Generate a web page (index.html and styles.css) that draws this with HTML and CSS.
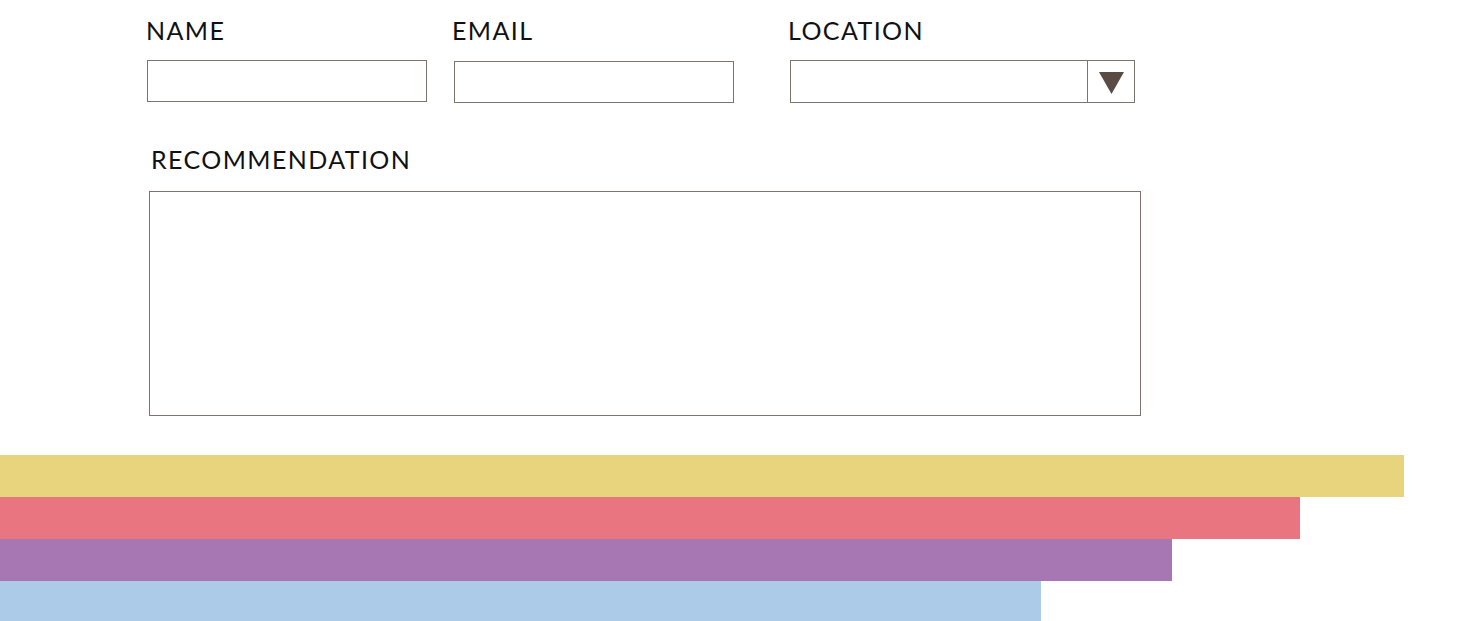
FILE: index.html
```html
<!DOCTYPE html>
<html lang="en">
<head>
<meta charset="utf-8">
<title>Recommendation form</title>
<link rel="stylesheet" href="styles.css">
</head>
<body>
<form class="form">
  <div class="row">
    <div class="field field-name">
      <label class="label">NAME</label>
      <div class="input"></div>
    </div>
    <div class="field field-email">
      <label class="label">EMAIL</label>
      <div class="input"></div>
    </div>
    <div class="field field-location">
      <label class="label">LOCATION</label>
      <div class="select">
        <div class="select-value"></div>
        <div class="select-btn">
          <svg width="25" height="22" viewBox="0 0 25 22"><polygon points="0,0 25,0 12.5,22" fill="#5a4b45"/></svg>
        </div>
      </div>
    </div>
  </div>
  <div class="field field-rec">
    <label class="label label-rec">RECOMMENDATION</label>
    <div class="textarea"></div>
  </div>
</form>
<div class="bars">
  <div class="bar bar-yellow"></div>
  <div class="bar bar-red"></div>
  <div class="bar bar-purple"></div>
  <div class="bar bar-blue"></div>
</div>
</body>
</html>
```

FILE: styles.css
```css
html, body {
  margin: 0;
  padding: 0;
  background: #ffffff;
}
body {
  font-family: "Lato", "Open Sans", sans-serif;
  color: #111111;
  overflow: hidden;
}
.form {
  padding: 14px 0 0 146px;
}
.row {
  display: flex;
  align-items: flex-start;
}
.field {
  display: flex;
  flex-direction: column;
}
.field-name { width: 282px; }
.field-email { width: 282px; margin-left: 24px; }
.field-location { margin-left: 54px; }
.label {
  font-size: 25px;
  line-height: 32px;
  letter-spacing: 1.4px;
  height: 32px;
  margin-bottom: 14px;
}
.input {
  margin-left: 1px;
  width: 278px;
  height: 40px;
  border: 1px solid #7d7370;
}
.field-email .input {
  margin-left: 2px;
  margin-top: 1px;
}
.select {
  margin-left: 2px;
  width: 343px;
  height: 41px;
  border: 1px solid #7d7370;
  display: flex;
}
.select-value {
  flex: 1;
  border-right: 1px solid #7d7370;
}
.select-btn {
  width: 46px;
  display: flex;
  align-items: center;
  justify-content: center;
  padding-top: 2px;
}
.select-btn svg { display: block; }
.field-rec {
  margin-top: 40px;
}
.label-rec {
  margin-left: 5px;
  margin-bottom: 16px;
}
.textarea {
  margin-left: 3px;
  width: 990px;
  height: 223px;
  border: 1px solid #7d7370;
}
.bars {
  margin-top: 39px;
  display: flex;
  flex-direction: column;
}
.bar {
  height: 42px;
}
.bar-yellow { width: 1404px; background: #e8d47d; }
.bar-red { width: 1300px; background: #e87580; }
.bar-purple { width: 1172px; background: #a677b2; }
.bar-blue { width: 1041px; background: #accbe9; }
```
